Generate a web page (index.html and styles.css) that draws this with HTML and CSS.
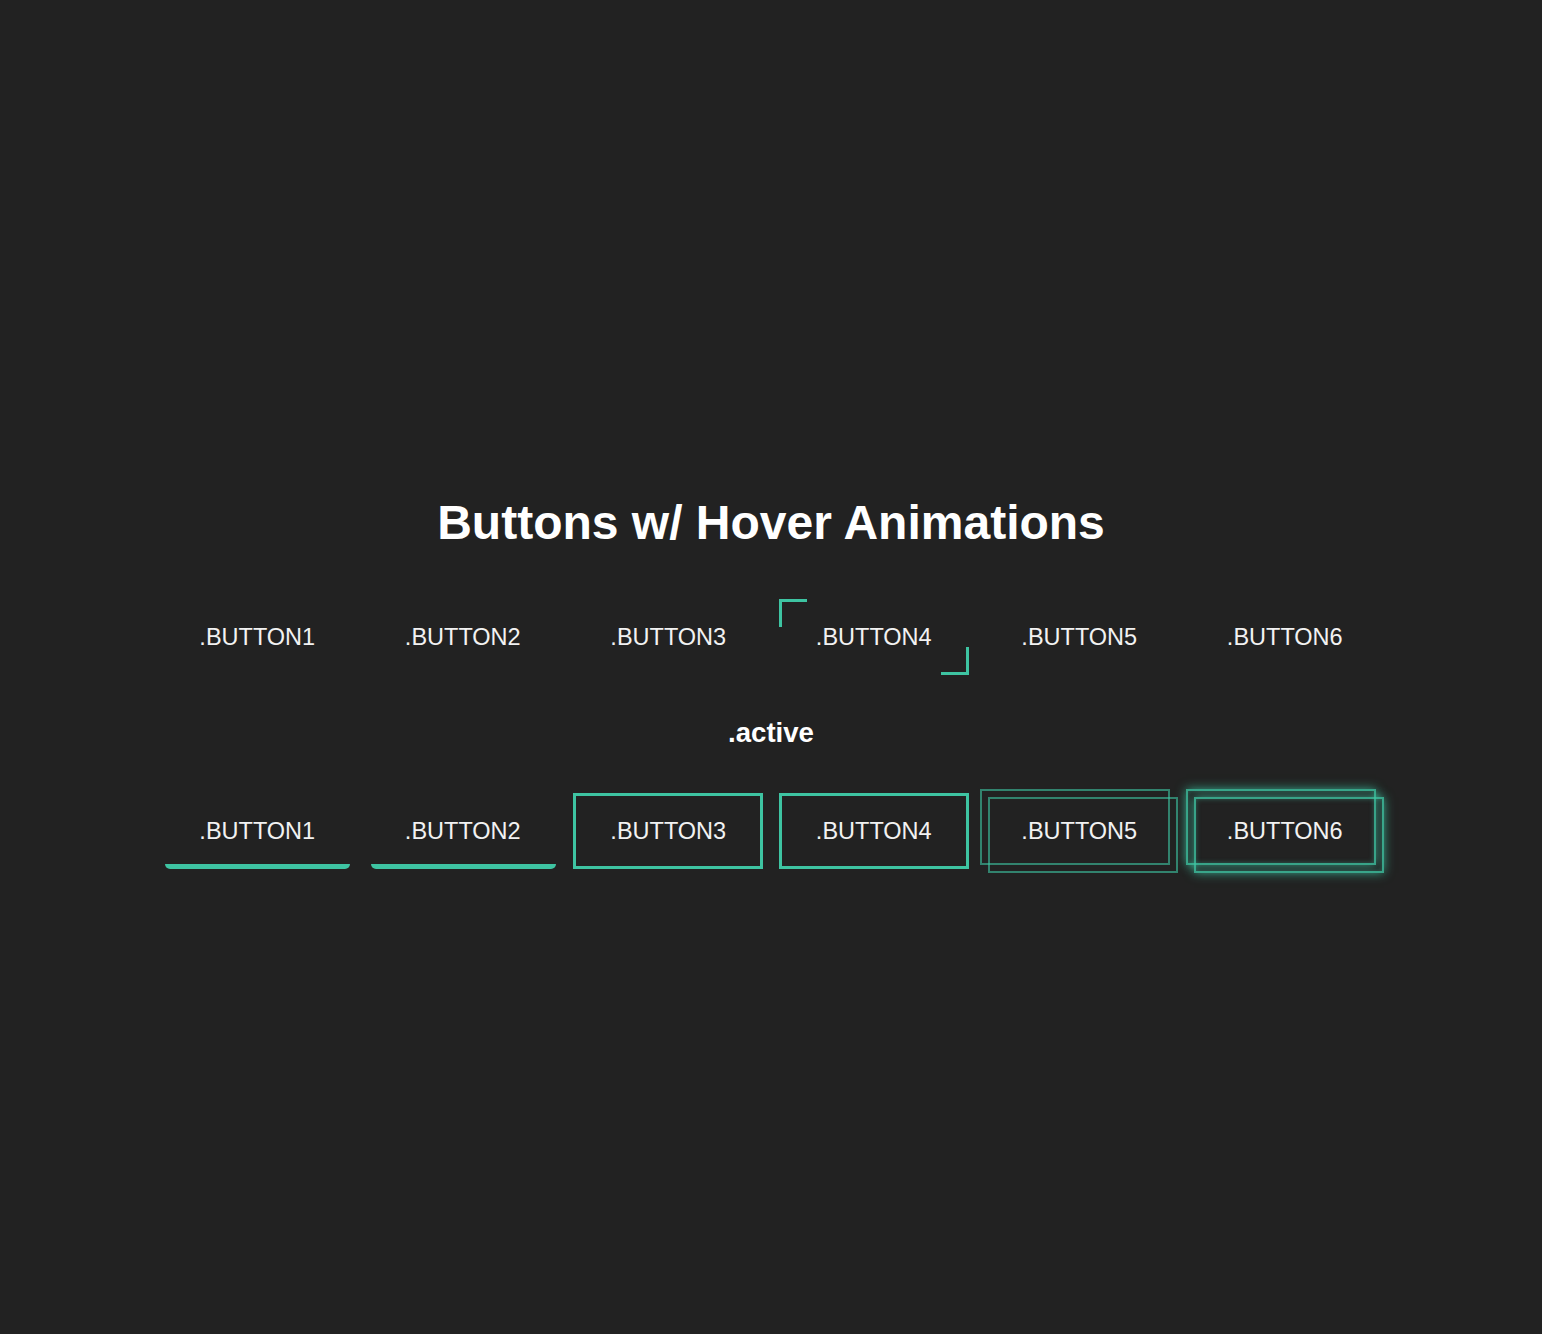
FILE: index.html
```html
<!DOCTYPE html>
<html lang="en">
<head>
<meta charset="utf-8">
<title>Buttons w/ Hover Animations</title>
<link rel="stylesheet" href="styles.css">
</head>
<body>
<main class="page">
  <h1 class="title">Buttons w/ Hover Animations</h1>
  <div class="row row-idle">
    <button class="btn button1">.BUTTON1</button>
    <button class="btn button2">.BUTTON2</button>
    <button class="btn button3">.BUTTON3</button>
    <button class="btn button4">.BUTTON4</button>
    <button class="btn button5">.BUTTON5</button>
    <button class="btn button6">.BUTTON6</button>
  </div>
  <h2 class="subtitle">.active</h2>
  <div class="row row-active">
    <button class="btn button1 active">.BUTTON1</button>
    <button class="btn button2 active">.BUTTON2</button>
    <button class="btn button3 active">.BUTTON3</button>
    <button class="btn button4 active">.BUTTON4</button>
    <button class="btn button5 active">.BUTTON5</button>
    <button class="btn button6 active">.BUTTON6</button>
  </div>
</main>
</body>
</html>
```

FILE: styles.css
```css
html, body {
  margin: 0;
  padding: 0;
  background: #222222;
}

body {
  font-family: "Liberation Sans", Arial, sans-serif;
  color: #f2f2f2;
  min-height: 1334px;
}

.page {
  display: flex;
  flex-direction: column;
  align-items: center;
  padding-top: 495px;
}

.title {
  margin: 0;
  font-size: 48px;
  line-height: 56px;
  font-weight: bold;
  color: #ffffff;
}

.subtitle {
  margin: 42px 0 0;
  font-size: 27.6px;
  line-height: 32px;
  font-weight: bold;
  color: #ffffff;
}

.row {
  display: flex;
  gap: 15.5px;
}

.row-idle {
  margin-top: 48px;
}

.row-active {
  margin-top: 44px;
}

.btn {
  position: relative;
  box-sizing: border-box;
  width: 190px;
  height: 76px;
  padding: 0;
  border: 0;
  background: transparent;
  color: #f2f2f2;
  font-family: "Liberation Sans", Arial, sans-serif;
  font-size: 23.5px;
  line-height: 27px;
  text-align: center;
  cursor: pointer;
}

/* button4 idle corner brackets */
.button4::before,
.button4::after {
  content: "";
  position: absolute;
  width: 28px;
  height: 28px;
  box-sizing: border-box;
}

.button4::before {
  top: 0;
  left: 0;
  border-top: 3px solid #3ec4a2;
  border-left: 3px solid #3ec4a2;
}

.button4::after {
  right: 0;
  bottom: 0;
  border-bottom: 3px solid #3ec4a2;
  border-right: 3px solid #3ec4a2;
}

/* active states */
.button1.active::after,
.button2.active::after {
  content: "";
  position: absolute;
  left: 3px;
  right: 2px;
  bottom: 0;
  height: 5px;
  background: #3ec4a2;
  border-radius: 0 0 6px 6px;
}

.button3.active {
  border: 3px solid #3ec4a2;
}

.button4.active::before,
.button4.active::after {
  width: 100%;
  height: 100%;
}

.button5.active::before,
.button5.active::after,
.button6.active::before,
.button6.active::after {
  content: "";
  position: absolute;
  inset: 0;
  box-sizing: border-box;
  border: 2px solid rgba(62, 196, 162, 0.6);
}

.button5.active::before,
.button6.active::before {
  transform: translate(-4px, -4px);
}

.button5.active::after,
.button6.active::after {
  transform: translate(4px, 4px);
}

.button6.active::before,
.button6.active::after {
  border-color: rgba(62, 196, 162, 0.8);
  box-shadow: 0 0 10px rgba(62, 196, 162, 0.75), inset 0 0 5px rgba(62, 196, 162, 0.4);
}
```
